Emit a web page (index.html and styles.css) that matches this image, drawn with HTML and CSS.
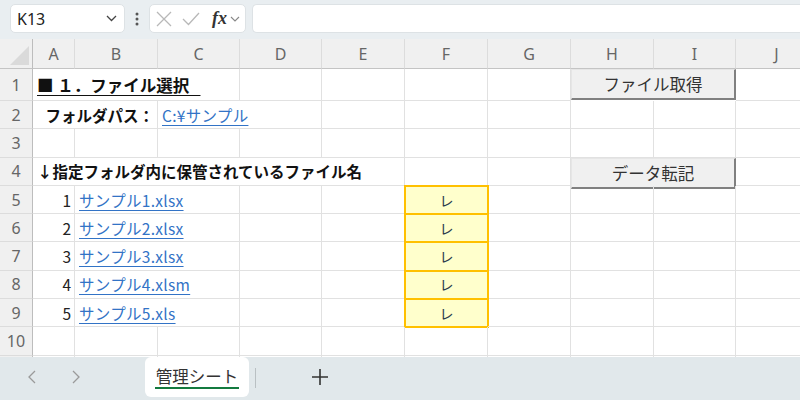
FILE: index.html
```html
<!DOCTYPE html>
<html lang="ja">
<head>
    <meta charset="UTF-8">
    <title>管理シート</title>
    <link rel="stylesheet" href="styles.css">
</head>
<body>
    <div class="app">
        <div class="topbar">
            <div class="namebox">
                <span>K13</span>
                <svg width="11" height="7" viewBox="0 0 11 7"><path d="M1 1 L5.5 5.5 L10 1" fill="none" stroke="#444" stroke-width="1.3"/></svg>
            </div>
            <div class="dots">
                <svg width="4" height="14" viewBox="0 0 4 14"><circle cx="2" cy="2" r="1.5" fill="#555"/><circle cx="2" cy="7" r="1.5" fill="#555"/><circle cx="2" cy="12" r="1.5" fill="#555"/></svg>
            </div>
            <div class="fxbox">
                <svg width="16" height="16" viewBox="0 0 16 16"><path d="M1 1 L15 15 M15 1 L1 15" stroke="#b8b8b8" stroke-width="1.3"/></svg>
                <svg width="18" height="14" viewBox="0 0 18 14"><path d="M1 7 L6.5 12.5 L17 1" fill="none" stroke="#b8b8b8" stroke-width="1.3"/></svg>
                <span class="fx">fx</span>
                <svg width="10" height="6" viewBox="0 0 10 6"><path d="M1 1 L5 5 L9 1" fill="none" stroke="#888" stroke-width="1.1"/></svg>
            </div>
            <div class="formula"></div>
        </div>

        <div class="sheet">
            <div class="grid">
                <!-- en-tete des colonnes -->
                <div class="corner">
                    <svg width="33" height="30" viewBox="0 0 33 30"><polygon points="10,26 29,7 29,26" fill="#dadada"/></svg>
                </div>
                <div class="ch">A</div>
                <div class="ch">B</div>
                <div class="ch">C</div>
                <div class="ch">D</div>
                <div class="ch">E</div>
                <div class="ch">F</div>
                <div class="ch">G</div>
                <div class="ch">H</div>
                <div class="ch">I</div>
                <div class="ch">J</div>

                <!-- 1 -->
                <div class="rh">1</div>
                <div class="c span3 bold"><span class="title">■ １．ファイル選択&nbsp;&nbsp;&nbsp;</span></div>
                <div class="c"></div>
                <div class="c"></div>
                <div class="c"></div>
                <div class="c"></div>
                <div class="c span2 btncell"><button type="button" class="macro">ファイル取得</button></div>
                <div class="c"></div>

                <!-- 2 -->
                <div class="rh">2</div>
                <div class="c span2 bold right">フォルダパス：</div>
                <div class="c span2"><span class="link">C:¥サンプル</span></div>
                <div class="c"></div>
                <div class="c"></div>
                <div class="c"></div>
                <div class="c"></div>
                <div class="c"></div>
                <div class="c"></div>

                <!-- 3 -->
                <div class="rh">3</div>
                <div class="c"></div>
                <div class="c"></div>
                <div class="c"></div>
                <div class="c"></div>
                <div class="c"></div>
                <div class="c"></div>
                <div class="c"></div>
                <div class="c"></div>
                <div class="c"></div>
                <div class="c"></div>

                <!-- 4 -->
                <div class="rh">4</div>
                <div class="c span5 bold">↓指定フォルダ内に保管されているファイル名</div>
                <div class="c"></div>
                <div class="c"></div>
                <div class="c span2 btncell"><button type="button" class="macro">データ転記</button></div>
                <div class="c"></div>

                <!-- 5 -->
                <div class="rh">5</div>
                <div class="c right">1</div>
                <div class="c span2"><span class="link">サンプル1.xlsx</span></div>
                <div class="c"></div>
                <div class="c"></div>
                <div class="c chk">レ</div>
                <div class="c"></div>
                <div class="c"></div>
                <div class="c"></div>
                <div class="c"></div>

                <!-- 6 -->
                <div class="rh">6</div>
                <div class="c right">2</div>
                <div class="c span2"><span class="link">サンプル2.xlsx</span></div>
                <div class="c"></div>
                <div class="c"></div>
                <div class="c chk">レ</div>
                <div class="c"></div>
                <div class="c"></div>
                <div class="c"></div>
                <div class="c"></div>

                <!-- 7 -->
                <div class="rh">7</div>
                <div class="c right">3</div>
                <div class="c span2"><span class="link">サンプル3.xlsx</span></div>
                <div class="c"></div>
                <div class="c"></div>
                <div class="c chk">レ</div>
                <div class="c"></div>
                <div class="c"></div>
                <div class="c"></div>
                <div class="c"></div>

                <!-- 8 -->
                <div class="rh">8</div>
                <div class="c right">4</div>
                <div class="c span2"><span class="link">サンプル4.xlsm</span></div>
                <div class="c"></div>
                <div class="c"></div>
                <div class="c chk">レ</div>
                <div class="c"></div>
                <div class="c"></div>
                <div class="c"></div>
                <div class="c"></div>

                <!-- 9 -->
                <div class="rh">9</div>
                <div class="c right">5</div>
                <div class="c span2"><span class="link">サンプル5.xls</span></div>
                <div class="c"></div>
                <div class="c"></div>
                <div class="c chk">レ</div>
                <div class="c"></div>
                <div class="c"></div>
                <div class="c"></div>
                <div class="c"></div>

                <!-- 10 -->
                <div class="rh">10</div>
                <div class="c"></div>
                <div class="c"></div>
                <div class="c"></div>
                <div class="c"></div>
                <div class="c"></div>
                <div class="c"></div>
                <div class="c"></div>
                <div class="c"></div>
                <div class="c"></div>
                <div class="c"></div>

                <!-- 11 (a peine visible) -->
                <div class="rh"></div>
                <div class="c"></div>
                <div class="c"></div>
                <div class="c"></div>
                <div class="c"></div>
                <div class="c"></div>
                <div class="c"></div>
                <div class="c"></div>
                <div class="c"></div>
                <div class="c"></div>
                <div class="c"></div>
            </div>
        </div>

        <div class="tabs">
            <div class="nav">
                <svg width="8" height="14" viewBox="0 0 8 14"><path d="M7 1 L1 7 L7 13" fill="none" stroke="#9a9a9a" stroke-width="1.3"/></svg>
            </div>
            <div class="nav">
                <svg width="8" height="14" viewBox="0 0 8 14"><path d="M1 1 L7 7 L1 13" fill="none" stroke="#9a9a9a" stroke-width="1.3"/></svg>
            </div>
            <div class="tab"><span class="tab-label">管理シート</span></div>
            <div class="divider"></div>
            <div class="add">
                <svg width="16" height="16" viewBox="0 0 16 16"><path d="M8 0 V16 M0 8 H16" stroke="#333" stroke-width="1.6"/></svg>
            </div>
        </div>
    </div>
</body>
</html>
```

FILE: styles.css
```css
body {
    margin: 0;
    padding: 0;
    width: 800px;
    height: 400px;
    overflow: hidden;
    font-family: "Noto Sans CJK JP", "Noto Sans", sans-serif;
    color: #222;
}

.app {
    width: 800px;
    height: 400px;
    display: flex;
    flex-direction: column;
    overflow: hidden;
}

/* barre de formule */
.topbar {
    height: 39px;
    flex: none;
    background-color: #e9eef1;
    display: flex;
    align-items: flex-start;
    padding: 4px 0 0 10px;
    box-sizing: border-box;
}

.namebox {
    width: 115px;
    height: 29px;
    background-color: #fff;
    border: 1px solid #dde2e5;
    border-radius: 5px;
    box-sizing: border-box;
    display: flex;
    align-items: center;
    justify-content: space-between;
    padding: 0 7px 0 6px;
    font-family: "Noto Sans", sans-serif;
    font-size: 16px;
    color: #222;
}

.dots {
    width: 24px;
    height: 29px;
    display: flex;
    align-items: center;
    justify-content: center;
}

.fxbox {
    width: 97px;
    height: 29px;
    background-color: #fff;
    border: 1px solid #dde2e5;
    border-radius: 5px;
    box-sizing: border-box;
    display: flex;
    align-items: center;
    padding: 0 4px 0 6px;
    gap: 10px;
}

.fx {
    font-family: "Liberation Serif", serif;
    font-style: italic;
    font-weight: bold;
    font-size: 18px;
    color: #333;
    margin-left: 2px;
    margin-right: -7px;
}

.formula {
    flex: 1;
    height: 29px;
    margin-left: 6px;
    background-color: #fff;
    border: 1px solid #dde2e5;
    border-right: none;
    border-radius: 5px 0 0 5px;
    box-sizing: border-box;
}

/* feuille */
.sheet {
    height: 318px;
    flex: none;
    overflow: hidden;
    background-color: #fff;
}

.grid {
    display: grid;
    grid-template-columns: 33px 42px 83px 82px 82px 83px 83px 83px 83px 82px 82px;
    grid-template-rows: 30px 32px repeat(10, 28.3px);
    width: 818px;
}

.corner {
    background-color: #f0f0f0;
    border-right: 1px solid #bdbdbd;
    border-bottom: 1px solid #c4c4c4;
    box-sizing: border-box;
}

.corner svg {
    display: block;
}

.ch {
    background-color: #f0f0f0;
    border-right: 1px solid #dcdcdc;
    border-bottom: 1px solid #c4c4c4;
    box-sizing: border-box;
    display: flex;
    align-items: center;
    justify-content: center;
    font-family: "Noto Sans", sans-serif;
    font-size: 16px;
    color: #666;
}

.rh {
    background-color: #f0f0f0;
    border-right: 1px solid #bdbdbd;
    border-bottom: 1px solid #dcdcdc;
    box-sizing: border-box;
    display: flex;
    align-items: center;
    justify-content: center;
    font-family: "Noto Sans", sans-serif;
    font-size: 16px;
    color: #666;
}

.c {
    border-right: 1px solid #e1e1e1;
    border-bottom: 1px solid #e1e1e1;
    box-sizing: border-box;
    display: flex;
    align-items: center;
    padding: 0 3px 0 4px;
    font-size: 15.5px;
    white-space: nowrap;
    min-width: 0;
}

.span2 { grid-column: span 2; }
.span3 { grid-column: span 3; }
.span5 { grid-column: span 5; }

.bold {
    font-weight: bold;
    color: #111;
}

.right {
    justify-content: flex-end;
}

.title {
    font-size: 16.5px;
    text-decoration: underline;
    text-underline-offset: 3px;
}

.link {
    color: #3273c6;
    letter-spacing: 0.3px;
    text-decoration: underline;
    text-underline-offset: 3px;
}

.chk {
    background-color: #ffffcc;
    outline: 2px solid #ffc000;
    outline-offset: -1px;
    justify-content: center;
    font-size: 14px;
    color: #2b3b4c;
}

.btncell {
    padding: 0;
    align-items: flex-start;
    border: none;
}

.macro {
    width: 100%;
    height: 31px;
    margin: 0;
    background-color: #f0f0f0;
    border: none;
    border-top: 1px solid #e6e6e6;
    border-left: 1px solid #e6e6e6;
    border-right: 2px solid #808080;
    border-bottom: 2px solid #808080;
    font-family: "Noto Sans CJK JP", sans-serif;
    font-size: 16.5px;
    color: #333;
    padding: 0;
}

/* onglets */
.tabs {
    height: 43px;
    flex: none;
    background-color: #e1e8eb;
    display: flex;
    align-items: flex-start;
    padding-left: 10px;
}

.nav {
    width: 44px;
    height: 40px;
    display: flex;
    align-items: center;
    justify-content: center;
}

.tab {
    margin-left: 47px;
    width: 104px;
    height: 40px;
    background-color: #fff;
    border-radius: 6px;
    box-sizing: border-box;
    padding-top: 6px;
    display: flex;
    justify-content: center;
    align-items: flex-start;
}

.tab-label {
    display: block;
    padding: 2px 1px 0;
    line-height: 22px;
    font-size: 16.5px;
    color: #333;
    border-bottom: 2.5px solid #137a3f;
}

.divider {
    width: 1px;
    height: 20px;
    margin: 11px 0 0 6px;
    background-color: #b9c0c3;
}

.add {
    width: 128px;
    height: 40px;
    display: flex;
    align-items: center;
    justify-content: center;
}
```
